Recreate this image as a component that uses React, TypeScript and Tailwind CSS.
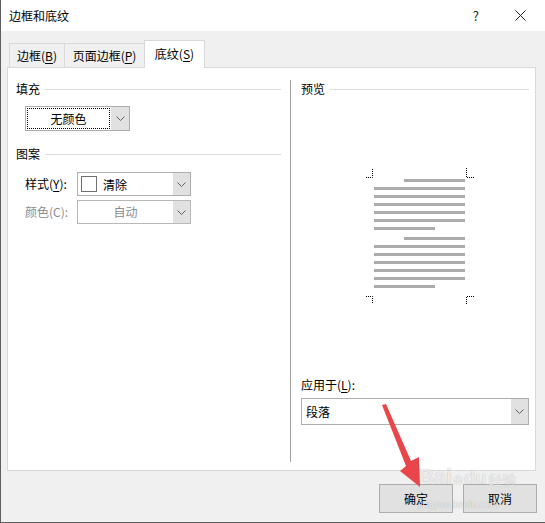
import React from "react";

const Chevron = ({ color = "#606060" }: { color?: string }) => (
  <svg width="9" height="5" viewBox="0 0 9 5" fill="none">
    <path d="M0.5 0.5 L4.5 4.5 L8.5 0.5" stroke={color} strokeWidth="1" />
  </svg>
);

const Heading = ({ label }: { label: string }) => (
  <div className="flex items-center h-[16px]">
    <span>{label}</span>
    <div className="flex-1 h-px bg-[#dcdcdc] ml-[5px]" />
  </div>
);

const DropButton = ({ w = "w-[17px]" }: { w?: string }) => (
  <div className={`${w} h-full bg-[#e1e1e1] flex items-center justify-center shrink-0`}>
    <Chevron />
  </div>
);

// text lines of the preview page: [y, x, width]
const previewLines: [number, number, number][] = [
  [11, 38, 61],
  [19, 8, 91],
  [27, 8, 91],
  [35, 8, 91],
  [43, 8, 91],
  [51, 8, 91],
  [59, 8, 61],
  [69, 38, 61],
  [77, 8, 91],
  [85, 8, 91],
  [93, 8, 91],
  [101, 8, 91],
  [109, 8, 91],
  [117, 8, 61],
];

const Preview = () => (
  <svg width="108" height="136" viewBox="0 0 108 136" fill="none">
    <g stroke="#000" strokeWidth="1" strokeDasharray="1 1">
      <path d="M0 9.5 H6.5 V0" />
      <path d="M100.5 0 V9.5 H108" />
      <path d="M0 128.5 H6.5 V136" />
      <path d="M108 128.5 H100.5 V136" />
    </g>
    {previewLines.map(([y, x, w], i) => (
      <rect key={i} x={x} y={y} width={w} height={3} fill="#acacac" />
    ))}
  </svg>
);

export default function App() {
  return (
    <div className="relative w-[545px] h-[523px] bg-[#f0f0f0] border-l border-b border-[#5e5e5e] flex flex-col overflow-hidden text-[12px] leading-[16px] text-black font-['Noto_Sans_CJK_SC','Microsoft_YaHei',sans-serif]">
      {/* Title bar */}
      <div className="h-[31px] bg-white flex items-center pl-[8px] pr-[19px] shrink-0">
        <span>边框和底纹</span>
        <div className="ml-auto flex items-center gap-[36px]">
          <span className="text-[13px] text-[#222]">?</span>
          <svg width="11" height="11" viewBox="0 0 11 11">
            <path d="M0.5 0.5 L10.5 10.5 M10.5 0.5 L0.5 10.5" stroke="#222" strokeWidth="1" />
          </svg>
        </div>
      </div>

      {/* Tabs */}
      <div className="mt-[9px] ml-[8px] flex items-end h-[27px]">
        <div className="w-[55px] h-[24px] border-l border-t border-[#d9d9d9] flex items-center justify-center">
          边框(<u className="underline-offset-2">B</u>)
        </div>
        <div className="w-[80px] h-[24px] border-l border-t border-[#d9d9d9] flex items-center justify-center">
          页面边框(<u className="underline-offset-2">P</u>)
        </div>
        <div className="relative z-10 -mb-px w-[61px] h-[28px] bg-white border-l border-t border-r border-[#d9d9d9] flex items-center justify-center pb-[2px]">
          底纹(<u className="underline-offset-2">S</u>)
        </div>
      </div>

      {/* Panel */}
      <div className="ml-[6px] w-[529px] h-[404px] border border-[#d9d9d9] bg-white flex">
        {/* Left column */}
        <div className="w-[282px] pl-[8px] pr-[9px] pt-[13px] flex flex-col">
          <Heading label="填充" />
          <div className="mt-[9px] ml-[9px] w-[105px] h-[25px] flex border border-[#adadad] bg-white">
            <div className="flex-1 p-[1px]">
              <div className="h-full border border-dotted border-black flex items-center justify-center">
                无颜色
              </div>
            </div>
            <DropButton w="w-[18px]" />
          </div>

          <div className="mt-[15px]">
            <Heading label="图案" />
          </div>

          <div className="mt-[10px] ml-[9px] flex items-center">
            <span className="w-[52px]">
              样式(<u className="underline-offset-2">Y</u>):
            </span>
            <div className="w-[114px] h-[24px] flex items-center border border-[#adadad]">
              <div className="ml-[3px] w-[16px] h-[16px] border border-[#707070]" />
              <span className="ml-[6px] mt-[2px]">清除</span>
              <div className="ml-auto h-full">
                <DropButton />
              </div>
            </div>
          </div>

          <div className="mt-[4px] ml-[9px] flex items-center text-[#8c8c8c]">
            <span className="w-[52px]">颜色(C):</span>
            <div className="w-[114px] h-[24px] flex items-center border border-[#b9b9b9]">
              <span className="flex-1 text-center">自动</span>
              <DropButton />
            </div>
          </div>
        </div>

        {/* Divider */}
        <div className="w-px bg-[#a0a0a0] mt-[12px] mb-[8px]" />

        {/* Right column */}
        <div className="flex-1 pl-[10px] pr-[6px] pt-[13px] pb-[45px] flex flex-col">
          <Heading label="预览" />
          <div className="mt-[71px] ml-[65px]">
            <Preview />
          </div>
          <div className="mt-auto">
            应用于(<u className="underline-offset-2">L</u>):
          </div>
          <div className="mt-[5px] w-[228px] h-[27px] flex items-center border border-[#adadad]">
            <span className="pl-[4px]">段落</span>
            <div className="ml-auto h-full">
              <DropButton />
            </div>
          </div>
        </div>
      </div>

      {/* Footer buttons */}
      <div className="mt-[13px] flex justify-end gap-[10px] pr-[8px]">
        <button className="w-[74px] h-[29px] bg-[#e1e1e1] border border-[#adadad] flex items-center justify-center">
          确定
        </button>
        <button className="w-[74px] h-[29px] bg-[#e1e1e1] border border-[#adadad] flex items-center justify-center">
          取消
        </button>
      </div>

      {/* Watermark */}
      <div className="absolute left-[417px] top-[465px] pointer-events-none flex flex-col items-start text-white/75 [text-shadow:0_0_1px_rgba(0,0,0,0.3)]">
        <div className="flex items-end font-['Liberation_Sans',sans-serif] font-bold text-[22px] leading-[24px]">
          <span>Bai</span>
          <span className="mx-[1px] text-[12px] leading-[18px] font-normal">✿</span>
          <span className="text-[18px] leading-[22px]">du</span>
          <span className="ml-[2px] text-[14px] leading-[20px] font-normal font-['Noto_Sans_CJK_SC',sans-serif]">经验</span>
        </div>
        <span className="mt-[10px] text-[10px] leading-[11px] font-['Liberation_Sans',sans-serif]">jingyan.baidu.com</span>
      </div>

      {/* Red arrow annotation */}
      <svg className="absolute inset-0 pointer-events-none" width="545" height="523" viewBox="0 0 545 523">
        <polygon
          points="381,405 385,404 410,461 418,457 419,487 399,471 405,466"
          fill="#e8464b"
        />
      </svg>
    </div>
  );
}
